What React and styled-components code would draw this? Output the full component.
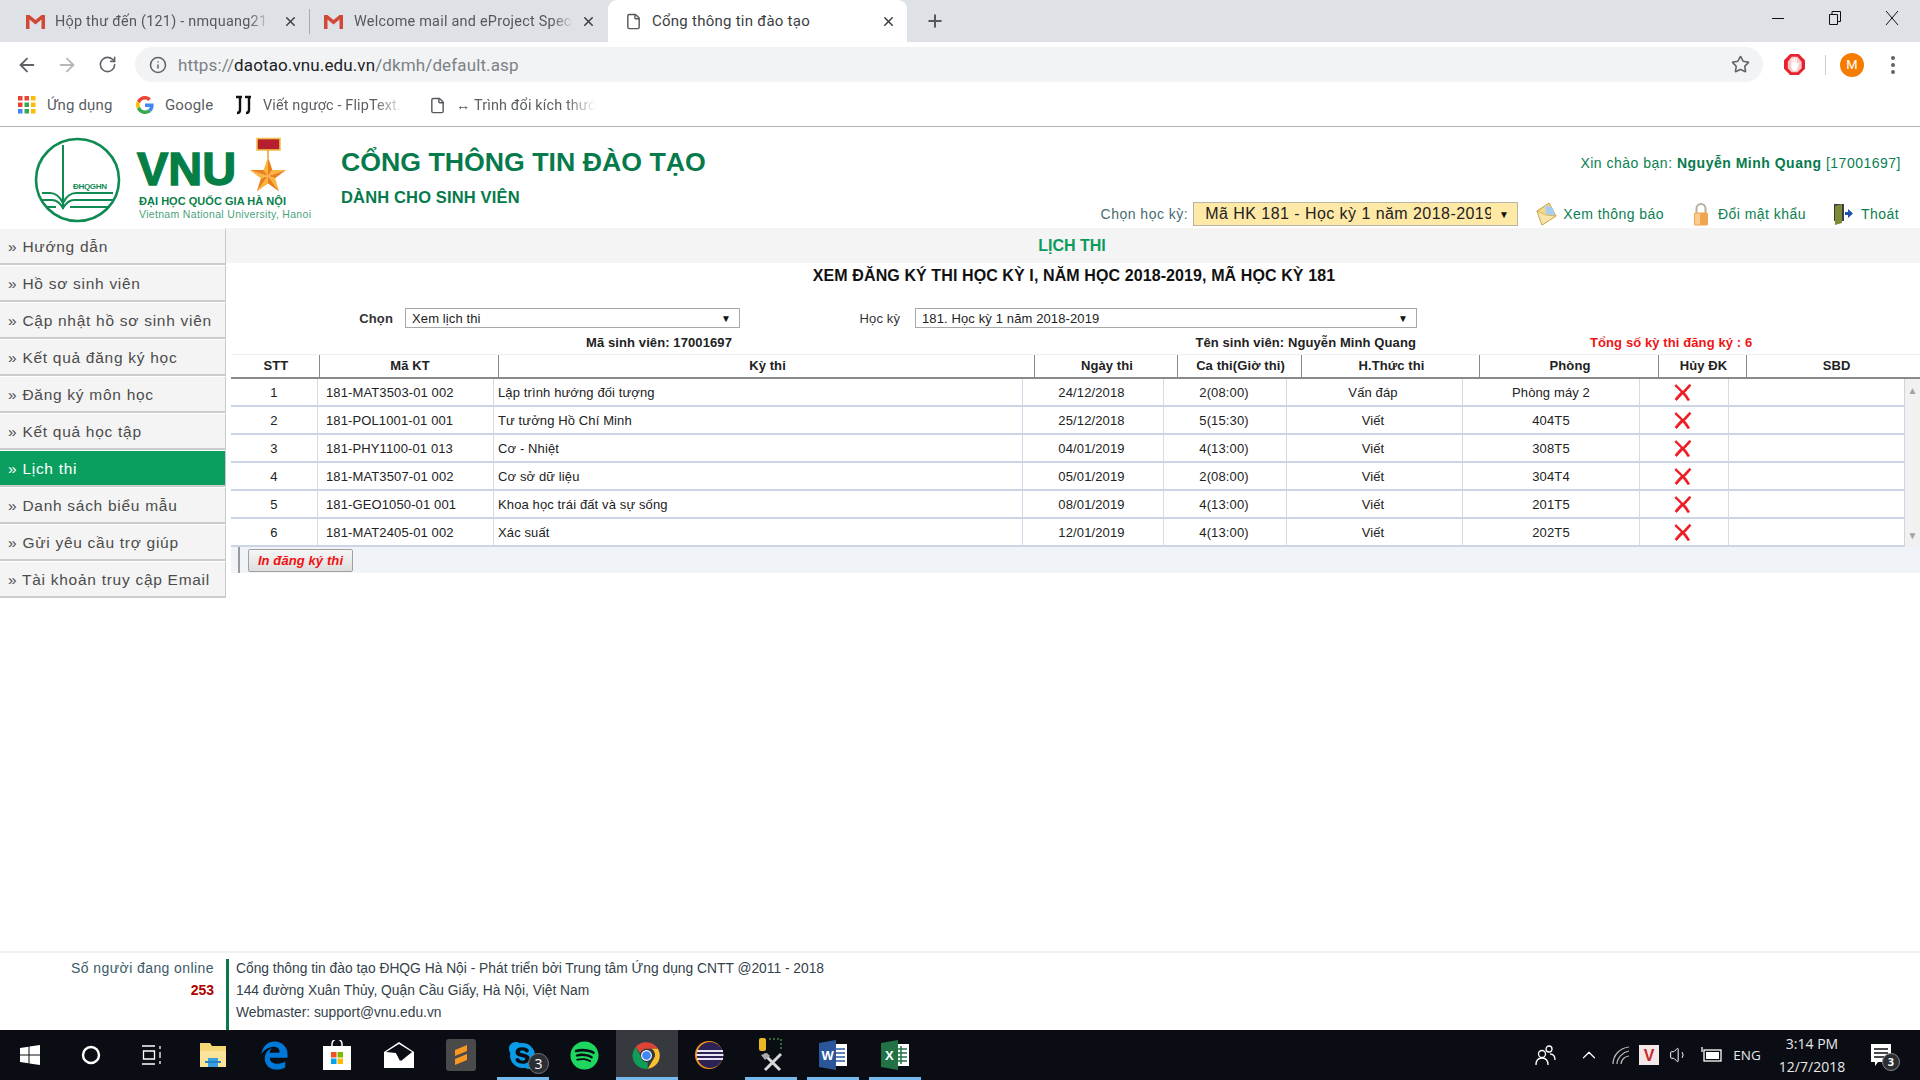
import React from "react";
import styled, { createGlobalStyle } from "styled-components";
import { ArrowLeft, ArrowRight, RotateCw, Info, Star, Plus, X, File, ChevronUp, Volume1 } from "lucide-react";
import { FaSkype, FaSpotify } from "react-icons/fa";
import { FaEdgeLegacy } from "react-icons/fa6";

const GlobalStyle = createGlobalStyle`
  html, body {
    margin: 0;
    padding: 0;
    background: #fff;
    overflow: hidden;
    font-family: "Liberation Sans", Arial, sans-serif;
  }
  * { box-sizing: border-box; }
`;

const Screen = styled.div`
  width: 1920px;
  height: 1080px;
  display: flex;
  flex-direction: column;
  overflow: hidden;
`;

/* browser chrome */
const TabStrip = styled.div`
  height: 42px;
  background: #dee1e6;
  display: flex;
  align-items: center;
  flex-shrink: 0;
`;

const Tab = styled.div`
  width: ${(p) => p.$width}px;
  height: 42px;
  display: flex;
  align-items: center;
  padding-left: ${(p) => p.$pad}px;
  font-family: Roboto, sans-serif;
  font-size: ${(p) => (p.$active ? 15 : 14.4)}px;
  letter-spacing: 0.25px;
  color: ${(p) => (p.$active ? "#3c4043" : "#55585c")};
  background: ${(p) => (p.$active ? "#fff" : "transparent")};
  border-radius: ${(p) => (p.$active ? "9px 9px 0 0" : "0")};
`;

const TabDivider = styled.div`
  width: 1px;
  height: 25px;
  background: #a8abb0;
`;

const TabTitle = styled.span`
  width: ${(p) => p.$width}px;
  margin-left: ${(p) => p.$gap}px;
  white-space: nowrap;
  overflow: hidden;
  -webkit-mask-image: ${(p) => (p.$fade ? "linear-gradient(to right, #000 90%, transparent)" : "none")};
`;

const TabClose = styled(X)`
  width: 15px;
  height: 15px;
  margin-left: ${(p) => p.$gap}px;
  color: #3c4043;
  stroke-width: 2.4;
`;

const NewTab = styled(Plus)`
  width: 20px;
  height: 20px;
  margin-left: 18px;
  color: #55585c;
  stroke-width: 2.4;
`;

const WindowButtons = styled.div`
  margin-left: auto;
  align-self: flex-start;
  display: flex;
  height: 36px;
  align-items: center;
`;

const WindowButton = styled.div`
  width: 57px;
  display: flex;
  justify-content: center;
`;

const Toolbar = styled.div`
  height: 42px;
  padding: 3px 12px 0 7px;
  display: flex;
  align-items: center;
  background: #fff;
  flex-shrink: 0;
`;

const NavButton = styled.div`
  width: 40px;
  display: flex;
  justify-content: center;
  color: ${(p) => (p.$muted ? "#b6b8bb" : "#5f6368")};
`;

const UrlPill = styled.div`
  flex: 1;
  height: 35px;
  margin-left: 8px;
  border-radius: 18px;
  background: #f1f3f4;
  display: flex;
  align-items: center;
  padding: 0 13px 0 14px;
  color: #5f6368;
`;

const UrlText = styled.div`
  margin-left: 11px;
  flex: 1;
  font-family: Roboto, sans-serif;
  font-size: 17px;
  letter-spacing: 0.12px;
  color: #7d8186;
  span { color: #202124; }
`;

const ToolSlot = styled.div`
  width: ${(p) => p.$width}px;
  display: flex;
  justify-content: center;
  align-items: center;
`;

const ToolDivider = styled.div`
  width: 1px;
  height: 20px;
  background: #ccc;
`;

const Avatar = styled.div`
  width: 24px;
  height: 24px;
  border-radius: 50%;
  background: #f57c00;
  color: #fff;
  font-family: Roboto, sans-serif;
  font-size: 13px;
  display: flex;
  align-items: center;
  justify-content: center;
`;

const MenuDots = styled.div`
  display: flex;
  flex-direction: column;
  gap: 3px;
  i {
    width: 4px;
    height: 4px;
    border-radius: 50%;
    background: #5f6368;
  }
`;

const BookmarkBar = styled.div`
  height: 43px;
  padding-left: 18px;
  display: flex;
  align-items: center;
  background: #fff;
  border-bottom: 1px solid #b2b2b2;
  flex-shrink: 0;
`;

const Bookmark = styled.div`
  display: flex;
  align-items: center;
  margin-right: ${(p) => p.$after}px;
`;

const BookmarkText = styled.span`
  width: ${(p) => p.$width}px;
  margin-left: ${(p) => p.$gap}px;
  font-family: Roboto, sans-serif;
  font-size: ${(p) => (p.$fade ? 14.4 : 15)}px;
  letter-spacing: 0.15px;
  color: #5b5e62;
  white-space: nowrap;
  overflow: hidden;
  -webkit-mask-image: ${(p) => (p.$fade ? "linear-gradient(to right, #000 78%, transparent)" : "none")};
`;

/* site header */
const SiteHeader = styled.header`
  height: 101px;
  display: flex;
  flex-shrink: 0;
`;

const LogoSlot = styled.div`
  width: 341px;
  flex-shrink: 0;
`;

const TitleBlock = styled.div`
  padding-top: 20px;
  color: #067a4b;
  font-weight: bold;
`;

const SiteTitle = styled.div`
  font-size: 26.7px;
  line-height: 30px;
`;

const SiteSubtitle = styled.div`
  margin-top: 10px;
  font-size: 16.5px;
  letter-spacing: 0.15px;
  line-height: 20px;
`;

const HeaderRight = styled.div`
  flex: 1;
  padding: 27px 19px 0 0;
  display: flex;
  flex-direction: column;
  align-items: flex-end;
`;

const Greeting = styled.div`
  font-size: 14px;
  letter-spacing: 0.5px;
  line-height: 18px;
  color: #0a8050;
  b { color: #067a4b; }
`;

const HeaderControls = styled.div`
  margin: 30px 2px 0 0;
  height: 24px;
  display: flex;
  align-items: center;
`;

const TermLabel = styled.span`
  font-size: 14px;
  letter-spacing: 0.5px;
  color: #4a6a70;
  margin-right: 5px;
`;

const TermSelect = styled.div`
  width: 325px;
  height: 24px;
  padding: 0 8px 0 11px;
  display: flex;
  align-items: center;
  justify-content: space-between;
  background: #ffe9a6;
  border: 1px solid #b5b5a8;
  font-size: 16px;
  letter-spacing: 0.45px;
  color: #222;
  span:first-child {
    width: 286px;
    overflow: hidden;
    white-space: nowrap;
  }
  span:last-child { font-size: 10px; color: #111; }
`;

const HeaderLink = styled.div`
  margin-left: ${(p) => p.$left}px;
  display: flex;
  align-items: center;
  gap: ${(p) => p.$gap}px;
  font-size: 14px;
  letter-spacing: 0.45px;
  color: #0a8050;
`;

/* body */
const Body = styled.div`
  flex: 1;
  display: flex;
  min-height: 0;
`;

const SideNav = styled.nav`
  width: 226px;
  flex-shrink: 0;
`;

const NavItem = styled.div`
  height: 37px;
  padding: 2px 0 0 8px;
  display: flex;
  align-items: center;
  font-size: 15.5px;
  letter-spacing: 0.72px;
  color: ${(p) => (p.$active ? "#fff" : "#4c4c4c")};
  background: ${(p) => (p.$active ? "#0a9f5f" : "#f4f4f4")};
  border-right: 1px solid #c8c8c8;
  border-bottom: 2px solid #ccc;
  border-top: 1px solid #fff;
`;

const Main = styled.main`
  flex: 1;
  min-width: 0;
`;

const PageTitle = styled.div`
  height: 35px;
  background: #f4f4f4;
  display: flex;
  align-items: center;
  justify-content: center;
  padding-right: 2px;
  font-size: 16px;
  font-weight: bold;
  color: #0a9b5c;
`;

const Panel = styled.div`
  padding-left: 5px;
`;

const PanelHeading = styled.h2`
  margin: 0;
  height: 25px;
  line-height: 25px;
  text-align: center;
  padding-right: 3px;
  font-size: 16px;
  letter-spacing: 0.1px;
  font-weight: bold;
  color: #111;
`;

const FilterRow = styled.div`
  margin-top: 20px;
  height: 20px;
  display: flex;
  align-items: center;
  font-size: 13px;
  letter-spacing: 0.12px;
`;

const FilterLabel = styled.label`
  width: ${(p) => p.$width}px;
  margin-right: ${(p) => p.$gap}px;
  text-align: right;
  font-weight: ${(p) => (p.$bold ? "bold" : "normal")};
  color: #333;
`;

const FilterSelect = styled.div`
  width: ${(p) => p.$width}px;
  height: 20px;
  padding: 0 8px 0 6px;
  display: flex;
  align-items: center;
  justify-content: space-between;
  border: 1px solid #a8a8a8;
  color: #222;
  span:last-child { font-size: 10px; color: #111; }
`;

const InfoRow = styled.div`
  height: 26px;
  padding-top: 7px;
  display: flex;
  font-size: 13px;
  letter-spacing: 0.1px;
  font-weight: bold;
  color: #222;
`;

const InfoCell = styled.div`
  width: ${(p) => p.$width}px;
  text-align: ${(p) => p.$align || "right"};
  margin-left: ${(p) => p.$left || 0}px;
  color: ${(p) => p.$color || "inherit"};
  white-space: nowrap;
`;

const HeadRow = styled.div`
  height: 25px;
  display: grid;
  grid-template-columns: 89px 179px 536px 143px 124px 178px 179px 88px 173px;
  border-top: 1px solid #eee;
  border-bottom: 2px solid #8a8a8a;
`;

const HeadCell = styled.div`
  display: flex;
  align-items: center;
  justify-content: center;
  padding: 0 0 1px 2px;
  font-size: 13px;
  letter-spacing: 0.1px;
  font-weight: bold;
  color: #222;
  border-right: 1px solid #8a8a8a;
  &:last-child { border-right: 0; padding-left: 6px; }
`;

const TableBody = styled.div`
  display: flex;
`;

const Rows = styled.div`
  width: 1674px;
`;

const DataRow = styled.div`
  height: 28px;
  display: grid;
  grid-template-columns: 87px 176px 529px 141px 123px 176px 177px 89px 176px;
  border-bottom: 2px solid #ccd5e3;
`;

const DataCell = styled.div`
  display: flex;
  align-items: center;
  justify-content: ${(p) => (p.$left ? "flex-start" : "center")};
  padding-left: ${(p) => p.$pad || 0}px;
  padding-right: ${(p) => p.$end || 0}px;
  font-size: 13px;
  letter-spacing: 0.12px;
  color: #222;
  border-right: 1px solid #d4dbe7;
  &:last-child { border-right: 1px solid #ccd5e3; }
`;

const Scrollbar = styled.div`
  flex: 1;
  background: #f1f1f1;
  display: flex;
  flex-direction: column;
  justify-content: space-between;
  align-items: center;
  padding: 6px 0;
  font-size: 10px;
  color: #a3a3a3;
`;

const TableFoot = styled.div`
  height: 26px;
  background: #f0f3f8;
  display: flex;
  align-items: center;
`;

const FootBar = styled.div`
  width: 2px;
  height: 26px;
  margin-left: 7px;
  background: #9a9a9a;
`;

const PrintButton = styled.button`
  width: 105px;
  height: 23px;
  margin-left: 8px;
  padding: 0;
  border: 1px solid #a0a0a0;
  border-radius: 2px;
  background: linear-gradient(#f6f6f6, #dedede);
  font-family: "Liberation Sans", Arial, sans-serif;
  font-size: 13px;
  letter-spacing: 0.1px;
  font-weight: bold;
  font-style: italic;
  color: #f01010;
`;

/* footer */
const SiteFooter = styled.footer`
  height: 79px;
  flex-shrink: 0;
  border-top: 2px solid #f0f0f0;
  padding-top: 6px;
  display: flex;
`;

const OnlineBox = styled.div`
  width: 226px;
  margin-top: -2px;
  padding-right: 12px;
  text-align: right;
  font-size: 14px;
  letter-spacing: 0.42px;
  line-height: 22px;
  color: #3c5a68;
  b { color: #b00000; display: block; letter-spacing: 0; }
`;

const FooterText = styled.div`
  flex: 1;
  border-left: 3px solid #067a4b;
  padding-left: 7px;
  font-size: 13.8px;
  line-height: 22px;
  color: #34424a;
  div:first-child { margin-top: -1px; }
`;

/* taskbar */
const Taskbar = styled.div`
  height: 50px;
  flex-shrink: 0;
  background: #0a0e14;
  display: flex;
  align-items: stretch;
`;

const TaskButton = styled.div`
  position: relative;
  width: ${(p) => (p.$narrow ? 60.67 : 62)}px;
  display: flex;
  align-items: center;
  justify-content: center;
  background: ${(p) => (p.$active ? "#363a3f" : "transparent")};
  &::after {
    content: "";
    display: ${(p) => (p.$open ? "block" : "none")};
    position: absolute;
    left: ${(p) => (p.$active ? 0 : 5)}px;
    right: ${(p) => (p.$active ? 0 : 5)}px;
    bottom: 0;
    height: 3px;
    background: #76b9ed;
  }
`;

const Badge = styled.span`
  position: absolute;
  right: 5px;
  bottom: 6px;
  width: 21px;
  height: 21px;
  border-radius: 50%;
  background: #2b2f34;
  border: 1px solid #777;
  color: #fff;
  font-family: "Open Sans", sans-serif;
  font-size: 14px;
  line-height: 19px;
  text-align: center;
`;

const Tray = styled.div`
  margin-left: auto;
  padding-right: 19px;
  display: flex;
  align-items: center;
  color: #fff;
`;

const TraySlot = styled.div`
  position: relative;
  width: ${(p) => p.$width}px;
  display: flex;
  justify-content: center;
  align-items: center;
`;

const TrayLang = styled(TraySlot)`
  font-family: "Open Sans", sans-serif;
  font-size: 13.5px;
  color: #e8e8e8;
`;

const Clock = styled.div`
  width: 98px;
  text-align: center;
  font-family: "Open Sans", sans-serif;
  font-size: 14px;
  line-height: 23px;
  color: #e8e8e8;
`;

const NoticeBadge = styled.span`
  position: absolute;
  left: 21px;
  top: 9px;
  width: 18px;
  height: 18px;
  border-radius: 50%;
  background: #2b2f34;
  border: 1px solid #888;
  color: #fff;
  font-family: "Open Sans", sans-serif;
  font-size: 11px;
  font-weight: bold;
  line-height: 16px;
  text-align: center;
`;

/* drawings */
const GmailIcon = () => (
  <svg width="19" height="15" viewBox="0 0 19 15">
    <path d="M0 1h3.5l6 5 6-5H19v14h-3.5V5.5l-6 5-6-5V15H0z" fill="#d14836" />
  </svg>
);

const GoogleIcon = () => (
  <svg width="18" height="18" viewBox="0 0 48 48">
    <path fill="#ea4335" d="M24 9.5c3.5 0 6.6 1.2 9.1 3.6l6.8-6.8C35.8 2.5 30.4 0 24 0 14.6 0 6.6 5.4 2.6 13.2l7.9 6.2C12.4 13.7 17.7 9.5 24 9.5z" />
    <path fill="#4285f4" d="M46.9 24.5c0-1.6-.1-3.1-.4-4.5H24v9h12.9c-.6 3-2.2 5.5-4.7 7.2l7.7 6c4.5-4.2 7-10.3 7-17.7z" />
    <path fill="#fbbc05" d="M10.5 28.6c-.5-1.4-.8-3-.8-4.6s.3-3.2.8-4.6l-7.9-6.2C.9 16.5 0 20.1 0 24s.9 7.5 2.6 10.8l7.9-6.2z" />
    <path fill="#34a853" d="M24 48c6.5 0 11.9-2.1 15.9-5.8l-7.7-6c-2.1 1.4-4.9 2.3-8.2 2.3-6.3 0-11.6-4.2-13.5-10l-7.9 6.2C6.6 42.6 14.6 48 24 48z" />
  </svg>
);

const AppsIcon = () => {
  const colors = ["#ea4335", "#ea4335", "#fbbc05", "#ea4335", "#34a853", "#fbbc05", "#4285f4", "#34a853", "#fbbc05"];
  return (
    <svg width="18" height="18" viewBox="0 0 18 18">
      {colors.map((c, i) => (
        <rect key={i} x={(i % 3) * 6.5} y={Math.floor(i / 3) * 6.5} width="4.5" height="4.5" fill={c} />
      ))}
    </svg>
  );
};

const FlipIcon = () => (
  <svg width="18" height="20" viewBox="0 0 18 20" fill="none" stroke="#111" strokeWidth="2.4">
    <path d="M1 2h6M5 2v13c0 2-1 3-3 3M10 2h6M14 2v13c0 2-1 3-3 3" />
  </svg>
);

const AdBlockIcon = () => (
  <svg width="21" height="21" viewBox="0 0 22 22">
    <path d="M6.500 0h9L22 6.500v9L15.500 22h-9L0 15.500v-9z" fill="#e8222c" />
    <path d="M8 3h6l4.500 5v7L14 19H8l-4-4V8z" fill="#f7c9c9" />
    <path d="M8 8V5h1v4h1V3.500h1.500V9h1V4.500h1V11l1.500-2 1 .5-2 6-1.500 2h-3L7.500 14z" fill="#fff" />
  </svg>
);

const starOuter = [[268, 157], [286.1, 170.1], [279.2, 191.4], [256.8, 191.4], [249.9, 170.1]];
const starInner = [[272.4, 169.9], [275.1, 178.3], [268, 183.5], [260.9, 178.3], [263.6, 169.9]];

const Logo = () => (
  <svg width="330" height="101" viewBox="0 127 330 101">
    <g fill="none" stroke="#0e8a52" strokeWidth="2">
      <ellipse cx="77.500" cy="180" rx="41.500" ry="41" strokeWidth="2.600" />
      <path d="M63 145v64" />
      <path d="M42 193h8c6 0 10 4 13 10 3-6 7-10 13-10h37" />
      <path d="M41 200h11c5 0 8 3 11 8 3-5 6-8 11-8h40" />
      <path d="M46 207h10M70 207h40" />
    </g>
    <text x="73" y="189" fontSize="8" fontWeight="bold" fill="#0e8a52" fontFamily="Liberation Sans" textLength="34">ĐHQGHN</text>
    <text x="137" y="185" fontSize="47" fontWeight="bold" fill="#067f47" fontFamily="Liberation Sans" stroke="#067f47" strokeWidth="1.400" textLength="99" lengthAdjust="spacingAndGlyphs">VNU</text>
    <rect x="257" y="138.500" width="23" height="11.500" fill="#b81f2e" stroke="#f0c24d" strokeWidth="1.600" />
    <path d="M268 150v8" stroke="#e0a030" strokeWidth="1.500" />
    {starOuter.map((o, i) => {
      const next = starInner[i];
      const prev = starInner[(i + 4) % 5];
      return (
        <g key={i}>
          <path d={`M268 176L${prev[0]} ${prev[1]}L${o[0]} ${o[1]}z`} fill="#fbb53c" />
          <path d={`M268 176L${next[0]} ${next[1]}L${o[0]} ${o[1]}z`} fill="#ea7f1c" />
        </g>
      );
    })}
    <text x="139" y="205" fontSize="11" fontWeight="bold" fill="#0a7f4b" fontFamily="Liberation Sans" textLength="147">ĐẠI HỌC QUỐC GIA HÀ NỘI</text>
    <text x="139" y="218" fontSize="10.500" fill="#4aa27a" fontFamily="Liberation Sans" textLength="172">Vietnam National University, Hanoi</text>
  </svg>
);

const EnvelopeIcon = () => (
  <svg width="21" height="24" viewBox="0 0 21 24">
    <path d="M1 9L13 1l7 13-14 9z" fill="#f3d98a" stroke="#c49a3a" />
    <path d="M9 3l8 3 2 8-9-2z" fill="#a8cdf0" />
    <path d="M1 9l9 4 10 1-14 9z" fill="#f8e6a8" stroke="#c49a3a" strokeWidth=".6" />
  </svg>
);

const LockIcon = () => (
  <svg width="16" height="24" viewBox="0 0 16 24">
    <path d="M3.500 11V6.500a4.500 4.500 0 019 0V11" fill="none" stroke="#b8b0a0" strokeWidth="2" />
    <rect x="1" y="10.500" width="14" height="13" rx="1.500" fill="#f0a550" />
    <rect x="2" y="11.500" width="5" height="11" fill="#f9cb8c" />
  </svg>
);

const DoorIcon = () => (
  <svg width="20" height="23" viewBox="0 0 20 23">
    <path d="M1 1h10v17H1z" fill="#33404a" />
    <path d="M2 3l7-2v19l-7 2z" fill="#7f8a35" />
    <path d="M12 9h3V6l5 4.500-5 4.500v-3h-3z" fill="#1c4fb0" />
  </svg>
);

const RedCross = () => (
  <svg width="18" height="18" viewBox="0 0 18 18">
    <path d="M2 1.500c3 3 5 5 7 6.800 2-2 4-4.500 6.500-7l1.500 1.200c-2 2.600-4.400 5-6.400 7.200 2 2.200 3.600 4.500 5 7.300l-2 .5c-1.500-2.500-3-4.700-4.900-6.500-2.200 2.200-4.200 4.300-6 6.500L1 16c1.800-2.500 4-4.800 6.200-7C5 7 3 5 .8 3z" fill="#ec1c24" stroke="#ec1c24" strokeWidth=".7" />
  </svg>
);

const ChromeIcon = () => (
  <svg width="29" height="29" viewBox="0 0 48 48">
    <path d="M24 2a22 22 0 0119 11H24a11 11 0 00-10.400 7.500L6 10A22 22 0 0124 2z" fill="#db4437" />
    <path d="M43 13a22 22 0 01-17 33l9.500-16A11 11 0 0032 13z" fill="#fbc02d" />
    <path d="M26 46A22 22 0 016 10l8 14a11 11 0 0012 11z" fill="#0f9d58" />
    <circle cx="24" cy="24" r="9" fill="#fff" />
    <circle cx="24" cy="24" r="7.200" fill="#4285f4" />
  </svg>
);

const taskIcons = [
  {
    key: "start",
    narrow: true,
    icon: (
      <svg width="20" height="20" viewBox="0 0 20 20" fill="#fff">
        <path d="M0 3l8.500-1.200V9.500H0zM9.500 1.600L20 0v9.500H9.500zM0 10.500h8.500v7.700L0 17zM9.500 10.500H20V20L9.500 18.400z" />
      </svg>
    ),
  },
  { key: "cortana", narrow: true, icon: <svg width="20" height="20" viewBox="0 0 20 20"><circle cx="10" cy="10" r="8" fill="none" stroke="#fff" strokeWidth="2.400" /></svg> },
  {
    key: "views",
    narrow: true,
    icon: (
      <svg width="20" height="20" viewBox="0 0 20 20" fill="none" stroke="#fff" strokeWidth="1.300">
        <path d="M0 1h13M0 19h13M1.500 6h11v8h-11zM18 1v3M18 7v6M18 16v3" />
      </svg>
    ),
  },
  {
    key: "explorer",
    icon: (
      <svg width="28" height="26" viewBox="0 0 28 26">
        <path d="M1 1h10l2 3h14v21H1z" fill="#f6d776" />
        <path d="M1 9h26v16H1z" fill="#fbe49a" />
        <path d="M9 16h10v9H9z" fill="#38a0e0" />
        <path d="M6 19h16v2H6z" fill="#2684c6" />
      </svg>
    ),
  },
  { key: "edge", icon: <FaEdgeLegacy size={29} color="#0078d7" /> },
  {
    key: "store",
    icon: (
      <svg width="28" height="30" viewBox="0 0 28 30">
        <path d="M9 7V4a5 5 0 0110 0v3" fill="none" stroke="#fff" strokeWidth="1.500" />
        <rect x="0" y="6" width="28" height="24" fill="#fff" />
        <rect x="8" y="12" width="5.500" height="5.500" fill="#f25022" />
        <rect x="14.500" y="12" width="5.500" height="5.500" fill="#7fba00" />
        <rect x="8" y="18.500" width="5.500" height="5.500" fill="#00a4ef" />
        <rect x="14.500" y="18.500" width="5.500" height="5.500" fill="#ffb900" />
      </svg>
    ),
  },
  {
    key: "mail",
    icon: (
      <svg width="30" height="26" viewBox="0 0 30 26">
        <path d="M15 0l15 10v16H0V10z" fill="#fff" />
        <path d="M2 10L15 2l13 8-11 7-1 2-4-8z" fill="#0a0e14" />
        <path d="M12 11l16-1-11 9z" fill="#0a0e14" />
      </svg>
    ),
  },
  {
    key: "sublime",
    icon: (
      <svg width="30" height="32" viewBox="0 0 30 32">
        <rect width="30" height="32" rx="3" fill="#4a4a4a" />
        <path d="M21 6v6l-12 5v-6zM9 26v-6l12-5v6z" fill="#f89820" />
      </svg>
    ),
  },
  { key: "skype", open: true, badge: "3", icon: <FaSkype size={31} color="#0a9be8" /> },
  { key: "spotify", icon: <FaSpotify size={29} color="#1ed760" /> },
  { key: "chrome", open: true, active: true, icon: <ChromeIcon /> },
  {
    key: "eclipse",
    icon: (
      <svg width="30" height="30" viewBox="0 0 30 30">
        <circle cx="15" cy="15" r="14" fill="#f7941e" />
        <circle cx="16" cy="15" r="13" fill="#2c2255" />
        <path d="M3 11h26M2.500 15h27M3 19h26" stroke="#e8e6f4" strokeWidth="2" />
      </svg>
    ),
  },
  {
    key: "tools",
    open: true,
    icon: (
      <svg width="30" height="34" viewBox="0 0 30 34">
        <rect x="3" y="0" width="7" height="13" rx="2" fill="#e8b923" />
        <path d="M13 1h12v12" fill="none" stroke="#3b8a3b" strokeWidth="1.500" strokeDasharray="2 2" />
        <path d="M8 16l16 16M25 16L9 32" stroke="#d8d8d8" strokeWidth="3" />
        <path d="M5 17l6-2 3 3-5 4z" fill="#aaa" />
      </svg>
    ),
  },
  {
    key: "word",
    open: true,
    icon: (
      <svg width="28" height="30" viewBox="0 0 28 30">
        <rect x="12" y="4" width="16" height="22" fill="#fff" />
        <path d="M14 9h12M14 13h12M14 17h12M14 21h12" stroke="#2b579a" strokeWidth="1.500" />
        <path d="M0 3l17-3v30L0 27z" fill="#2b579a" />
        <text x="2.500" y="20" fontSize="13" fontWeight="bold" fill="#fff" fontFamily="Liberation Sans">W</text>
      </svg>
    ),
  },
  {
    key: "excel",
    open: true,
    icon: (
      <svg width="28" height="30" viewBox="0 0 28 30">
        <rect x="12" y="4" width="16" height="22" fill="#fff" />
        <path d="M14 9h12M14 13h12M14 17h12M14 21h12M20 6v18" stroke="#217346" strokeWidth="1.500" />
        <path d="M0 3l17-3v30L0 27z" fill="#217346" />
        <text x="4" y="20" fontSize="13" fontWeight="bold" fill="#fff" fontFamily="Liberation Sans">X</text>
      </svg>
    ),
  },
];

const menu = [
  "Hướng dẫn",
  "Hồ sơ sinh viên",
  "Cập nhật hồ sơ sinh viên",
  "Kết quả đăng ký học",
  "Đăng ký môn học",
  "Kết quả học tập",
  "Lịch thi",
  "Danh sách biểu mẫu",
  "Gửi yêu cầu trợ giúp",
  "Tài khoản truy cập Email",
];

const headers = ["STT", "Mã KT", "Kỳ thi", "Ngày thi", "Ca thi(Giờ thi)", "H.Thức thi", "Phòng", "Hủy ĐK", "SBD"];

const exams = [
  ["1", "181-MAT3503-01 002", "Lập trình hướng đối tượng", "24/12/2018", "2(08:00)", "Vấn đáp", "Phòng máy 2"],
  ["2", "181-POL1001-01 001", "Tư tưởng Hồ Chí Minh", "25/12/2018", "5(15:30)", "Viết", "404T5"],
  ["3", "181-PHY1100-01 013", "Cơ - Nhiệt", "04/01/2019", "4(13:00)", "Viết", "308T5"],
  ["4", "181-MAT3507-01 002", "Cơ sở dữ liệu", "05/01/2019", "2(08:00)", "Viết", "304T4"],
  ["5", "181-GEO1050-01 001", "Khoa học trái đất và sự sống", "08/01/2019", "4(13:00)", "Viết", "201T5"],
  ["6", "181-MAT2405-01 002", "Xác suất", "12/01/2019", "4(13:00)", "Viết", "202T5"],
];

export default function App() {
  return (
    <Screen>
      <GlobalStyle />

      <TabStrip>
        <Tab $width={309} $pad={26}>
          <GmailIcon />
          <TabTitle $width={216} $gap={10} $fade>Hộp thư đến (121) - nmquang21</TabTitle>
          <TabClose $gap={12} />
        </Tab>
        <TabDivider />
        <Tab $width={298} $pad={14}>
          <GmailIcon />
          <TabTitle $width={220} $gap={11} $fade>Welcome mail and eProject Spec</TabTitle>
          <TabClose $gap={7} />
        </Tab>
        <Tab $width={299} $pad={17} $active>
          <File size={17} color="#55585c" />
          <TabTitle $width={200} $gap={10}>Cổng thông tin đào tạo</TabTitle>
          <TabClose $gap={29} />
        </Tab>
        <NewTab />
        <WindowButtons>
          <WindowButton>
            <svg width="14" height="14" viewBox="0 0 14 14"><path d="M1 7.500h12" stroke="#111" /></svg>
          </WindowButton>
          <WindowButton>
            <svg width="14" height="14" viewBox="0 0 14 14" fill="none" stroke="#111">
              <path d="M1.500 3.500h8v10h-8zM4 3.500V.5h8.500v10h-3" />
            </svg>
          </WindowButton>
          <WindowButton>
            <svg width="14" height="14" viewBox="0 0 14 14"><path d="M1 0l12 14M13 0L1 14" stroke="#111" /></svg>
          </WindowButton>
        </WindowButtons>
      </TabStrip>

      <Toolbar>
        <NavButton><ArrowLeft size={22} /></NavButton>
        <NavButton $muted><ArrowRight size={22} /></NavButton>
        <NavButton><RotateCw size={19} /></NavButton>
        <UrlPill>
          <Info size={18} />
          <UrlText>https://<span>daotao.vnu.edu.vn</span>/dkmh/default.asp</UrlText>
          <Star size={19} />
        </UrlPill>
        <ToolSlot $width={62}><AdBlockIcon /></ToolSlot>
        <ToolDivider />
        <ToolSlot $width={52}><Avatar>M</Avatar></ToolSlot>
        <ToolSlot $width={30}><MenuDots><i /><i /><i /></MenuDots></ToolSlot>
      </Toolbar>

      <BookmarkBar>
        <Bookmark $after={22}>
          <AppsIcon />
          <BookmarkText $width={67} $gap={11}>Ứng dụng</BookmarkText>
        </Bookmark>
        <Bookmark $after={22}>
          <GoogleIcon />
          <BookmarkText $width={48} $gap={11}>Google</BookmarkText>
        </Bookmark>
        <Bookmark $after={24}>
          <FlipIcon />
          <BookmarkText $width={142} $gap={10} $fade>Viết ngược - FlipText.</BookmarkText>
        </Bookmark>
        <Bookmark $after={0}>
          <File size={17} color="#55585c" />
          <BookmarkText $width={140} $gap={10} $fade>↔ Trình đổi kích thướ</BookmarkText>
        </Bookmark>
      </BookmarkBar>

      <SiteHeader>
        <LogoSlot><Logo /></LogoSlot>
        <TitleBlock>
          <SiteTitle>CỔNG THÔNG TIN ĐÀO TẠO</SiteTitle>
          <SiteSubtitle>DÀNH CHO SINH VIÊN</SiteSubtitle>
        </TitleBlock>
        <HeaderRight>
          <Greeting>Xin chào bạn: <b>Nguyễn Minh Quang</b> [17001697]</Greeting>
          <HeaderControls>
            <TermLabel>Chọn học kỳ:</TermLabel>
            <TermSelect>
              <span>Mã HK 181 - Học kỳ 1 năm 2018-2019</span>
              <span>▼</span>
            </TermSelect>
            <HeaderLink $left={18} $gap={6}><EnvelopeIcon />Xem thông báo</HeaderLink>
            <HeaderLink $left={29} $gap={9}><LockIcon />Đổi mật khẩu</HeaderLink>
            <HeaderLink $left={27} $gap={8}><DoorIcon />Thoát</HeaderLink>
          </HeaderControls>
        </HeaderRight>
      </SiteHeader>

      <Body>
        <SideNav>
          {menu.map((item) => (
            <NavItem key={item} $active={item === "Lịch thi"}>» {item}</NavItem>
          ))}
        </SideNav>

        <Main>
          <PageTitle>LỊCH THI</PageTitle>
          <Panel>
            <PanelHeading>XEM ĐĂNG KÝ THI HỌC KỲ I, NĂM HỌC 2018-2019, MÃ HỌC KỲ 181</PanelHeading>
            <FilterRow>
              <FilterLabel $width={162} $gap={12} $bold>Chọn</FilterLabel>
              <FilterSelect $width={335}><span>Xem lịch thi</span><span>▼</span></FilterSelect>
              <FilterLabel $width={160} $gap={15}>Học kỳ</FilterLabel>
              <FilterSelect $width={502}><span>181. Học kỳ 1 năm 2018-2019</span><span>▼</span></FilterSelect>
            </FilterRow>
            <InfoRow>
              <InfoCell $width={501}>Mã sinh viên: 17001697</InfoCell>
              <InfoCell $width={684}>Tên sinh viên: Nguyễn Minh Quang</InfoCell>
              <InfoCell $width={170} $left={174} $align="left" $color="#f01515">Tổng số kỳ thi đăng ký : 6</InfoCell>
            </InfoRow>
            <HeadRow>
              {headers.map((h) => <HeadCell key={h}>{h}</HeadCell>)}
            </HeadRow>
            <TableBody>
              <Rows>
                {exams.map((row) => (
                  <DataRow key={row[0]}>
                    <DataCell>{row[0]}</DataCell>
                    <DataCell $left $pad={8}>{row[1]}</DataCell>
                    <DataCell $left $pad={4}>{row[2]}</DataCell>
                    <DataCell $end={3}>{row[3]}</DataCell>
                    <DataCell $end={2}>{row[4]}</DataCell>
                    <DataCell $end={3}>{row[5]}</DataCell>
                    <DataCell>{row[6]}</DataCell>
                    <DataCell $end={2}><RedCross /></DataCell>
                    <DataCell />
                  </DataRow>
                ))}
              </Rows>
              <Scrollbar><span>▲</span><span>▼</span></Scrollbar>
            </TableBody>
            <TableFoot>
              <FootBar />
              <PrintButton>In đăng ký thi</PrintButton>
            </TableFoot>
          </Panel>
        </Main>
      </Body>

      <SiteFooter>
        <OnlineBox>
          Số người đang online
          <b>253</b>
        </OnlineBox>
        <FooterText>
          <div>Cổng thông tin đào tạo ĐHQG Hà Nội - Phát triển bởi Trung tâm Ứng dụng CNTT @2011 - 2018</div>
          <div>144 đường Xuân Thủy, Quận Cầu Giấy, Hà Nội, Việt Nam</div>
          <div>Webmaster: support@vnu.edu.vn</div>
        </FooterText>
      </SiteFooter>

      <Taskbar>
        {taskIcons.map((t) => (
          <TaskButton key={t.key} $open={t.open} $active={t.active} $narrow={t.narrow}>
            {t.icon}
            {t.badge && <Badge>{t.badge}</Badge>}
          </TaskButton>
        ))}
        <Tray>
          <TraySlot $width={44}>
            <svg width="22" height="22" viewBox="0 0 22 22" fill="none" stroke="#fff" strokeWidth="1.300">
              <circle cx="8" cy="10" r="3.500" /><path d="M2 21c0-5 2-7 6-7s6 2 6 7" />
              <circle cx="15" cy="5" r="3" /><path d="M16 10c3 0 5 2 5 6" />
            </svg>
          </TraySlot>
          <TraySlot $width={44}><ChevronUp size={22} strokeWidth={1.300} /></TraySlot>
          <TraySlot $width={20}>
            <svg width="20" height="20" viewBox="0 0 20 20" fill="none" stroke="#bbb" strokeWidth="1.200">
              <path d="M2 19C2 10 9 3 18 2M6 19c0-6 6-12 12-13M10 19c0-4 4-8 8-8" />
            </svg>
          </TraySlot>
          <TraySlot $width={36}>
            <svg width="20" height="20" viewBox="0 0 20 20">
              <rect width="20" height="20" fill="#f4e8e8" />
              <text x="10" y="16" textAnchor="middle" fontSize="16" fontWeight="bold" fill="#c62828" fontFamily="Liberation Sans">V</text>
            </svg>
          </TraySlot>
          <TraySlot $width={24}><Volume1 size={20} strokeWidth={1.200} /></TraySlot>
          <TraySlot $width={40}>
            <svg width="22" height="16" viewBox="0 0 22 16" fill="none" stroke="#fff" strokeWidth="1.300">
              <rect x="4" y="3" width="17" height="11" /><rect x="6" y="5" width="13" height="7" fill="#fff" stroke="none" /><path d="M2 0v5" />
            </svg>
          </TraySlot>
          <TrayLang $width={32}>ENG</TrayLang>
          <Clock>3:14 PM<br />12/7/2018</Clock>
          <TraySlot $width={40}>
            <svg width="22" height="22" viewBox="0 0 22 22">
              <path d="M1 0h20v18H8l-3 4v-4H1z" fill="#fff" />
              <path d="M4 5h14M4 9h14M4 13h14" stroke="#0a0e14" strokeWidth="1.500" />
            </svg>
            <NoticeBadge>3</NoticeBadge>
          </TraySlot>
        </Tray>
      </Taskbar>
    </Screen>
  );
}
